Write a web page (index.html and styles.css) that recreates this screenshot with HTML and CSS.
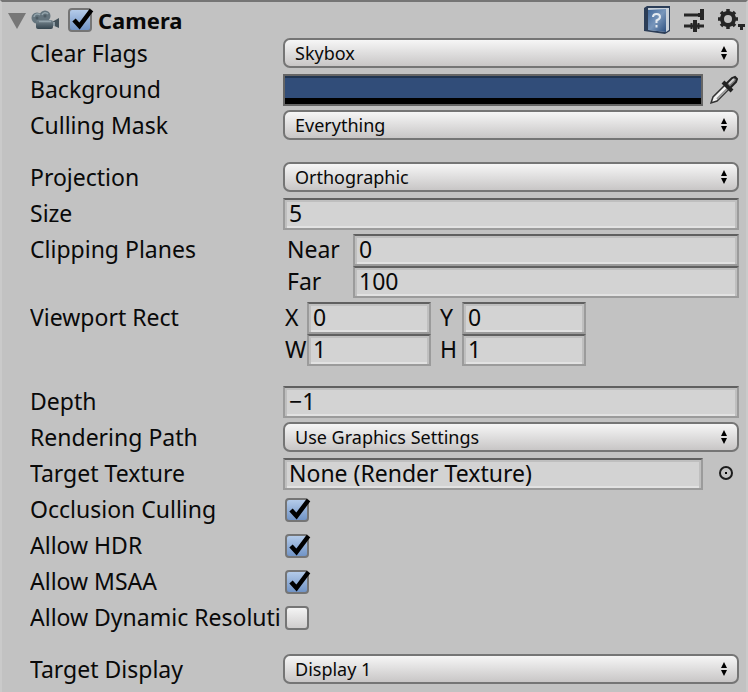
FILE: index.html
```html
<!DOCTYPE html>
<html lang="en">
<head>
<meta charset="utf-8">
<title>Camera</title>
<link rel="stylesheet" href="styles.css">
</head>
<body>
<main class="inspector">
  <header class="head">
    <button class="fold" aria-label="Collapse component"><svg width="18" height="18" viewBox="0 0 18 18"><path d="M0 2H18L9 18Z" fill="#777"/></svg></button>
    <svg class="cam" width="30" height="20" viewBox="0 0 30 20">
      <defs><linearGradient id="body" x1="0" y1="0" x2="0" y2="1"><stop offset="0" stop-color="#7b8a93"/><stop offset="1" stop-color="#34444e"/></linearGradient></defs>
      <path d="M21 12L28 8V18L21 15Z" fill="#44525a"/>
      <rect x="21" y="12" width="3" height="4" fill="#8c9ba3"/>
      <circle cx="6" cy="8" r="5.500" fill="#64747d"/>
      <circle cx="14" cy="6" r="5.500" fill="#64747d"/>
      <rect x="5" y="10" width="17" height="9" rx="2" fill="url(#body)"/>
      <path d="M3 7a3.500 3.500 0 0 1 6-2M11 5a3.500 3.500 0 0 1 6-1M8 11.500H20" stroke="#94a4ac" stroke-width="1.500" fill="none"/>
      <circle cx="6" cy="8" r="1.500" fill="#4d5b63"/><circle cx="14" cy="6" r="1.500" fill="#4d5b63"/>
    </svg>
    <label class="title"><span class="check"><input type="checkbox" checked><svg class="tick" width="22" height="22" viewBox="0 0 22 22"><path d="M2 12L7.500 18L19.500 2" fill="none" stroke="#000" stroke-width="4.500"/></svg></span>Camera</label>
    <div class="tools">
      <button aria-label="Help"><svg width="26" height="28" viewBox="0 0 26 28">
        <defs><linearGradient id="book" x1="0" y1="0" x2="1" y2="1"><stop offset="0" stop-color="#3f6698"/><stop offset=".5" stop-color="#7896bb"/><stop offset="1" stop-color="#2d5080"/></linearGradient></defs>
        <path d="M0 2L3 0H26V25L21 28L0 25Z" fill="#2b3d57"/><path d="M4 2H25V24L22 26L5 24Z" fill="#c9d1da"/><path d="M4 4L22 3V26L4 24Z" fill="url(#book)"/>
        <path d="M9 11Q9 8 12.500 8Q16 8 16 11Q16 13 12.500 14.500V17M12.500 19V21.500" fill="none" stroke="#e4eaf0" stroke-width="2"/>
      </svg></button>
      <button aria-label="Presets"><svg width="20" height="24" viewBox="0 0 20 24"><path d="M0 7H14M0 18H6M14 18H20M6 18H14" fill="none" stroke="#262626" stroke-width="3"/><path d="M14 7H18M18 1V12M11 12V24" fill="none" stroke="#262626" stroke-width="4"/><path d="M7.500 15V21M14.500 15V21" stroke="#262626" stroke-width="2"/></svg></button>
      <button aria-label="Component menu"><svg width="27" height="24" viewBox="0 0 27 24"><circle cx="10" cy="11" r="6" fill="none" stroke="#262626" stroke-width="4"/><path d="M10 1V5M10 17V21M0 11H4M16 11H20M3 4L6 7M14 15L17 18M3 18L6 15M14 7L17 4" stroke="#262626" stroke-width="3.500"/><path d="M20 16H27V19H25V22H22V19H20Z" fill="#262626"/></svg></button>
    </div>
  </header>

  <form class="fields">
    <div class="row"><label for="flags">Clear Flags</label><div class="pick"><select id="flags"><option>Skybox</option></select><svg width="6" height="14" viewBox="0 0 6 14"><path d="M0 6L3 0L6 6ZM0 8L3 14L6 8Z"/></svg></div></div>
    <div class="row"><label for="bg">Background</label><div class="with-tool"><button type="button" id="bg" class="swatch"></button><button type="button" class="tool" aria-label="Pick a color"><svg width="28" height="30" viewBox="0 0 28 30"><path d="M1 28L3 22L16 9L20 13L7 26Z" fill="#f4f4f4" stroke="#333" stroke-width="1.500"/><path d="M7 24L18 13" stroke="#999" stroke-width="2"/><path d="M13 7L22 16" stroke="#222" stroke-width="4"/><path d="M16 9L22 3L25 2L27 4L26 7L20 13Z" fill="#777" stroke="#222" stroke-width="2"/><path d="M19 9L24 4" stroke="#ccc" stroke-width="2"/></svg></button></div></div>
    <div class="row"><label for="mask">Culling Mask</label><div class="pick"><select id="mask"><option>Everything</option></select><svg width="6" height="14" viewBox="0 0 6 14"><path d="M0 6L3 0L6 6ZM0 8L3 14L6 8Z"/></svg></div></div>

    <div class="row apart"><label for="proj">Projection</label><div class="pick"><select id="proj"><option>Orthographic</option></select><svg width="6" height="14" viewBox="0 0 6 14"><path d="M0 6L3 0L6 6ZM0 8L3 14L6 8Z"/></svg></div></div>
    <div class="row"><label for="size">Size</label><input class="text" id="size" value="5"></div>
    <div class="row"><span class="name">Clipping Planes</span>
      <div class="planes">
        <label for="near">Near</label><input class="text" id="near" value="0">
        <label for="far">Far</label><input class="text" id="far" value="100">
      </div></div>
    <div class="row"><span class="name">Viewport Rect</span>
      <div class="rect">
        <label for="x">X</label><input class="text" id="x" value="0"><label for="y">Y</label><input class="text" id="y" value="0">
        <label for="w">W</label><input class="text" id="w" value="1"><label for="h">H</label><input class="text" id="h" value="1">
      </div></div>

    <div class="row apart"><label for="depth">Depth</label><input class="text" id="depth" value="−1"></div>
    <div class="row"><label for="path">Rendering Path</label><div class="pick"><select id="path"><option>Use Graphics Settings</option></select><svg width="6" height="14" viewBox="0 0 6 14"><path d="M0 6L3 0L6 6ZM0 8L3 14L6 8Z"/></svg></div></div>
    <div class="row"><label for="texture">Target Texture</label><div class="with-tool"><input class="text" id="texture" value="None (Render Texture)" readonly><button type="button" class="tool" aria-label="Select texture"><svg width="18" height="16" viewBox="0 0 18 16"><circle cx="11" cy="7" r="6" fill="none" stroke="#1c1c1c" stroke-width="2"/><rect x="10" y="6" width="2" height="2"/></svg></button></div></div>
    <div class="row"><label for="occ">Occlusion Culling</label><span class="check"><input type="checkbox" id="occ" checked><svg class="tick" width="22" height="22" viewBox="0 0 22 22"><path d="M2 12L7.500 18L19.500 2" fill="none" stroke="#000" stroke-width="4.500"/></svg></span></div>
    <div class="row"><label for="hdr">Allow HDR</label><span class="check"><input type="checkbox" id="hdr" checked><svg class="tick" width="22" height="22" viewBox="0 0 22 22"><path d="M2 12L7.500 18L19.500 2" fill="none" stroke="#000" stroke-width="4.500"/></svg></span></div>
    <div class="row"><label for="msaa">Allow MSAA</label><span class="check"><input type="checkbox" id="msaa" checked><svg class="tick" width="22" height="22" viewBox="0 0 22 22"><path d="M2 12L7.500 18L19.500 2" fill="none" stroke="#000" stroke-width="4.500"/></svg></span></div>
    <div class="row"><label for="dyn">Allow Dynamic Resolution</label><span class="check"><input type="checkbox" id="dyn"></span></div>

    <div class="row apart"><label for="display">Target Display</label><div class="pick"><select id="display"><option>Display 1</option></select><svg width="6" height="14" viewBox="0 0 6 14"><path d="M0 6L3 0L6 6ZM0 8L3 14L6 8Z"/></svg></div></div>
  </form>
</main>
</body>
</html>
```
FILE: styles.css
```css
* { box-sizing: border-box; }
body {
  margin: 0;
  background: #c2c2c2;
  color: #090909;
  font: 23px/30px "Lucida Grande", "Noto Sans", sans-serif;
}
button { padding: 0; border: 0; background: none; }
svg { display: block; }
.inspector {
  min-height: 100vh;
  border: 2px solid #cacaca;
  border-top-color: #757575;
  border-bottom: 0;
}
.head {
  display: flex;
  align-items: center;
  height: 36px;
  padding: 0 1px 0 6px;
}
.cam { margin: 0 7px 0 5px; }
.title {
  display: flex;
  align-items: center;
  gap: 6px;
  font-size: 22px;
  font-weight: bold;
}
.tools {
  display: flex;
  align-items: center;
  gap: 14px;
  margin-left: auto;
}
.fields {
  display: grid;
  gap: 4px;
  padding: 0 7px 0 28px;
}
.row {
  display: grid;
  grid-template-columns: 251px minmax(0, 1fr);
  column-gap: 2px;
}
.row > label, .name {
  height: 32px;
  overflow-x: clip;
  white-space: nowrap;
}
.apart { margin-top: 16px; }
.pick { position: relative; height: 32px; }
.pick select {
  display: block;
  width: 100%;
  height: 30px;
  padding: 0 10px;
  appearance: none;
  border: 2px solid #757575;
  border-radius: 7px;
  background: linear-gradient(#f6f6f6, #c8c6c6);
  color: #090909;
  font: 18px "Lucida Grande", "Noto Sans", sans-serif;
}
.pick svg {
  position: absolute;
  top: 8px;
  right: 12px;
  pointer-events: none;
}
.text {
  width: 100%;
  min-width: 0;
  height: 32px;
  padding: 0 4px 2px;
  border: 2px solid #9b9b9b;
  border-top-color: #606060;
  border-radius: 0;
  background: #d3d3d3;
  box-shadow: inset 2px 2px #bfbfbf, inset -2px 0 #bfbfbf, inset 0 -2px #e2e2e2;
  color: #090909;
  font: inherit;
  outline: 0;
}
.with-tool {
  display: grid;
  grid-template-columns: minmax(0, 1fr) 30px;
  column-gap: 6px;
}
.tool { display: grid; place-items: center; }
.swatch {
  height: 32px;
  border: 2px solid #656565;
  background: linear-gradient(#203450 2px, #314d79 2px 22px, #000 22px);
}
.planes {
  display: grid;
  grid-template-columns: 66px minmax(0, 1fr);
  padding-left: 4px;
}
.rect {
  display: grid;
  grid-template-columns: 22px 124px 31px 124px;
  padding-left: 2px;
}
.rect label:nth-of-type(even) { padding-left: 9px; }
.check {
  position: relative;
  width: 24px;
  height: 24px;
}
.row .check { margin: 4px 0 0 2px; }
.check input {
  display: block;
  width: 24px;
  height: 24px;
  margin: 0;
  appearance: none;
  border: 2px solid #757575;
  border-radius: 4px;
  background: linear-gradient(#f4f4f4, #cfcdcd);
}
.check input:checked { background: linear-gradient(#b4cbe9, #7194c6); }
.tick {
  position: absolute;
  top: 0;
  left: 4px;
  pointer-events: none;
}
```
